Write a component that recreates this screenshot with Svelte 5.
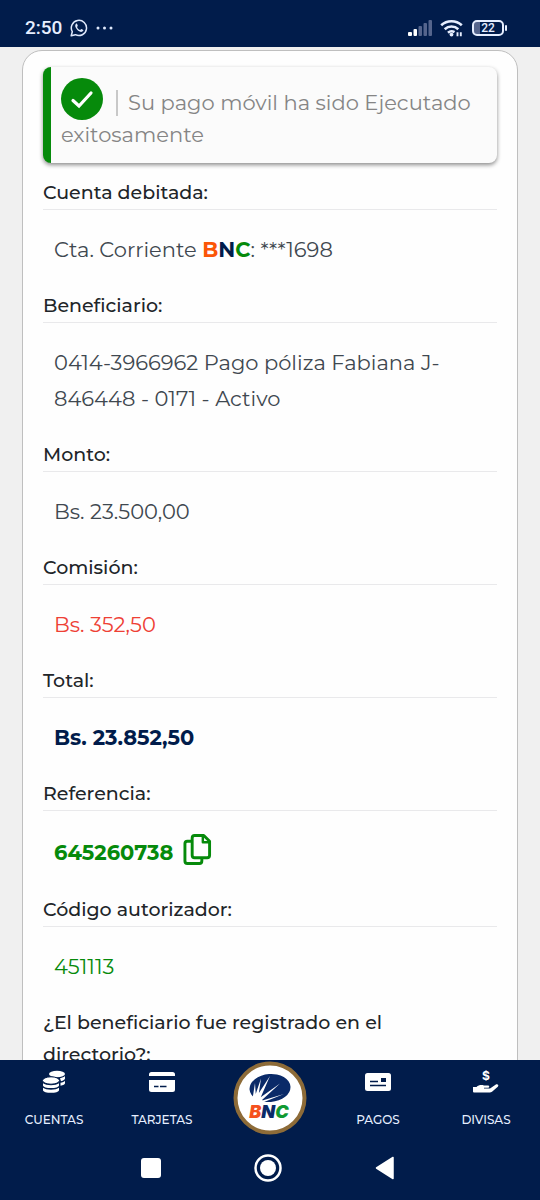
<script lang="ts">
  type Row = { label: string; value: string; tone?: 'fee' | 'total' }

  const account = { kind: 'Cta. Corriente', mask: '***1698' }
  const reference = '645260738'

  const rows: Row[] = [
    { label: 'Beneficiario:', value: '0414-3966962 Pago póliza Fabiana J-846448 - 0171 - Activo' },
    { label: 'Monto:', value: 'Bs. 23.500,00' },
    { label: 'Comisión:', value: 'Bs. 352,50', tone: 'fee' },
    { label: 'Total:', value: 'Bs. 23.852,50', tone: 'total' },
  ]

  function copyReference() {
    navigator.clipboard?.writeText(reference)
  }
</script>

<div class="screen">
  <header class="status">
    <div class="status-side">
      <span class="clock">2:50</span>
      <svg width="18" height="18" viewBox="0 0 18 18" fill="none" stroke="#dfe8fb" aria-label="WhatsApp">
        <path d="M1.2 16.8l1.1-4.1A7.6 7.6 0 1 1 5.4 15.7z" stroke-width="1.5" stroke-linejoin="round" />
        <path d="M6 4.8c-1.6 1.4-.7 3.9 1.2 5.9s4.4 3 5.9 1.4c.4-.7.3-1.1-.2-1.4l-1.5-.8c-.5-.2-.8 1-1.3 1-1 0-3-2-3-3 .2-.5.9-.7.7-1.2L7.1 5c-.3-.5-.7-.5-1.1-.2z" fill="#dfe8fb" stroke="none" />
      </svg>
      <svg width="18" height="4" viewBox="0 0 18 4" fill="#dfe8fb" aria-hidden="true">
        <circle cx="2" cy="2" r="1.5" />
        <circle cx="8.5" cy="2" r="1.5" />
        <circle cx="15" cy="2" r="1.5" />
      </svg>
    </div>
    <div class="status-side">
      <svg width="25" height="16" viewBox="0 0 25 16" fill="#55658d" aria-label="Señal">
        <rect x="1" y="12" width="4" height="4" rx="1" fill="#fff" />
        <rect x="6.5" y="9" width="3.5" height="7" rx="1" fill="#fff" />
        <rect x="11.5" y="6" width="3.5" height="10" rx="1" />
        <rect x="16.5" y="3" width="3.5" height="13" rx="1" />
        <rect x="21.5" y="0" width="3.5" height="16" rx="1" />
      </svg>
      <svg width="24" height="18" viewBox="0 0 24 18" fill="none" stroke="#e6eeff" stroke-width="2.6" aria-label="Wi-Fi">
        <path d="M1.2 6.3a15 15 0 0 1 20.6 0" />
        <path d="M4.7 10.2a10 10 0 0 1 13.6 0" />
        <path d="M8 13.8a5.500 5.500 0 0 1 6.500-.6" />
        <circle cx="11.5" cy="15.6" r="1.9" fill="#e6eeff" stroke="none" />
        <path d="M17.5 13.2v4M20.8 13.2v4" stroke-width="1.9" />
      </svg>
      <div class="battery"><span>22</span></div>
    </div>
  </header>

  <main>
    <section class="receipt">
      <div class="notice" role="status">
        <svg class="check" width="42" height="42" viewBox="0 0 42 42" aria-hidden="true">
          <circle cx="21" cy="21" r="21" fill="#068a0b" />
          <path d="M12 22.5l6 5.5L30 15" fill="none" stroke="#fff" stroke-width="3.2" stroke-linecap="round" />
        </svg>
        <span class="bar"></span>
        Su pago móvil ha sido Ejecutado exitosamente
      </div>

      <dl>
        <dt>Cuenta debitada:</dt>
        <dd>{account.kind} <b><span class="b">B</span><span class="n">N</span><span class="c">C</span></b>: {account.mask}</dd>
        {#each rows as row (row.label)}
          <dt>{row.label}</dt>
          <dd class={row.tone}>{row.value}</dd>
        {/each}
        <dt>Referencia:</dt>
        <dd class="reference">
          {reference}
          <button type="button" onclick={copyReference} aria-label="Copiar referencia">
            <svg width="29" height="33" viewBox="0 0 30 34" fill="none" stroke="#068a0b" stroke-width="3" stroke-linejoin="round">
              <path d="M9 8.500H4.500a2.500 2.500 0 0 0-2.500 2.500v18a2.500 2.500 0 0 0 2.500 2.500H17a2.500 2.500 0 0 0 2.500-2.500v-3" />
              <path d="M12 2.500h9.500l6 6V23a2.500 2.500 0 0 1-2.500 2.500H12A2.500 2.500 0 0 1 9.500 23V5A2.500 2.500 0 0 1 12 2.500z" />
              <path d="M20.500 3v6.500H27" stroke-width="2.5" />
            </svg>
          </button>
        </dd>
        <dt>Código autorizador:</dt>
        <dd class="code">451113</dd>
        <dt>¿El beneficiario fue registrado en el directorio?:</dt>
      </dl>
    </section>
  </main>

  <nav class="tabs">
    <a href="#cuentas">
      <svg width="24" height="24" viewBox="0 0 24 24" fill="#fff" aria-hidden="true">
        <ellipse cx="15" cy="4" rx="8" ry="3.2" />
        <path d="M18 8.200c2.200-.4 4.200-1.200 5-2.200v2.500c0 1.200-1.600 2.200-4 2.700zM18.500 12.800c2-.5 3.700-1.200 4.500-2.100v2.500c0 1.100-1.700 2-4.500 2.500z" />
        <ellipse cx="9" cy="10.5" rx="8.5" ry="3.7" stroke="#011c4b" stroke-width="1" />
        <path d="M1 13.200c3 2.600 13 2.600 16 0v2.300c0 3.400-16 3.400-16 0zM1 17.700c3 2.600 13 2.600 16 0v2.600c0 3.400-16 3.400-16 0z" />
      </svg>
      CUENTAS
    </a>
    <a href="#tarjetas">
      <svg width="26" height="24" viewBox="0 0 26 24" fill="#fff" aria-hidden="true">
        <path d="M2.500 2h21A2.500 2.500 0 0 1 26 4.500V6H0V4.500A2.500 2.500 0 0 1 2.500 2zM0 10h26v9.500a2.500 2.500 0 0 1-2.500 2.500h-21A2.500 2.500 0 0 1 0 19.500z" />
        <path d="M5 16.500h4.500M11 16.500h6.500" stroke="#011c4b" stroke-width="1.5" />
      </svg>
      TARJETAS
    </a>
    <a class="home" href="#inicio" aria-label="Inicio">
      <svg width="74" height="74" viewBox="0 0 74 74" aria-hidden="true">
        <circle cx="37" cy="37" r="34.5" fill="#fff" stroke="#8d6b38" stroke-width="4" />
        <ellipse cx="37" cy="27" rx="20.5" ry="14" fill="#0a2a68" transform="rotate(-4 37 27)" />
        <path d="M14 32l7 7 8 0 3 2.500-8 2-12-6z" fill="#fff" />
        <path d="M19 41L22 22l1 15zM20 41L28 17.500 25 38zM20 41L37 15 27 38zM21 41L47 22.500 29 39zM21 42L51 33 31 41z" fill="#fff" />
        <text x="36" y="57" text-anchor="middle" class="brand"><tspan fill="#f5511e">B</tspan><tspan fill="#0a2a68">N</tspan><tspan fill="#109a32">C</tspan></text>
      </svg>
    </a>
    <a href="#pagos">
      <svg width="26" height="24" viewBox="0 0 26 24" fill="#fff" aria-hidden="true">
        <rect x="0" y="3" width="26" height="18" rx="2.5" />
        <path d="M5 11.500h8M5 15.500h16" stroke="#011c4b" stroke-width="1.4" />
        <rect x="16" y="8" width="5" height="4" fill="#011c4b" />
      </svg>
      PAGOS
    </a>
    <a href="#divisas">
      <svg class="divisas" width="26" height="24" viewBox="0 0 26 24" fill="#fff" aria-hidden="true">
        <path d="M0 17h3.500c2-2 5-2.500 7.500-1.500h4c1.700 0 1.700 2.300 0 2.300h-4v.7h6l5.500-3.800c2-1.300 3.800.6 2.300 2l-5.800 5c-.7.5-1.300.8-2.200.8H1a1 1 0 0 1-1-1z" />
        <text x="13" y="10" text-anchor="middle" class="dollar">$</text>
      </svg>
      DIVISAS
    </a>
  </nav>

  <footer class="system">
    <button type="button" aria-label="Recientes">
      <svg width="20" height="20" viewBox="0 0 20 20"><rect width="20" height="20" rx="3" fill="#fff" /></svg>
    </button>
    <button type="button" aria-label="Inicio del sistema">
      <svg width="28" height="28" viewBox="0 0 28 28"><circle cx="14" cy="14" r="12.5" fill="none" stroke="#fff" stroke-width="2.5" /><circle cx="14" cy="14" r="8" fill="#fff" /></svg>
    </button>
    <button type="button" aria-label="Atrás">
      <svg width="20" height="24" viewBox="0 0 20 24"><path d="M1.500 12L18 1.500v21z" fill="#fff" stroke="#fff" stroke-width="1.5" stroke-linejoin="round" /></svg>
    </button>
  </footer>
</div>

<style>
  :global(body) {
    margin: 0;
    background: #f0f0f0;
  }

  .screen {
    --navy: #011c4b;
    --green: #068a0b;
    display: flex;
    flex-direction: column;
    height: 100vh;
    font-family: Montserrat, Inter, sans-serif;
    color: #212529;
  }

  svg {
    display: block;
    flex-shrink: 0;
  }

  button {
    padding: 0;
    border: none;
    background: transparent;
    cursor: pointer;
  }

  .status {
    display: flex;
    justify-content: space-between;
    align-items: center;
    height: 47px;
    padding: 8px 36px 0 25px;
    box-sizing: border-box;
    flex-shrink: 0;
    background: var(--navy);
    color: #e6eeff;
    font-family: Roboto, sans-serif;
  }

  .status-side {
    display: flex;
    align-items: center;
    gap: 8px;
  }

  .clock {
    font-size: 19px;
    font-weight: 500;
  }

  .battery {
    position: relative;
    width: 32px;
    height: 16px;
    box-sizing: border-box;
    border: 2px solid #e6eeff;
    border-radius: 5px;
    background: linear-gradient(to right, #55658d 6px, transparent 6px);
    font-size: 12px;
    font-weight: 500;
    line-height: 12px;
    text-align: center;
  }

  .battery::after {
    content: '';
    position: absolute;
    right: -5px;
    top: 3px;
    width: 2px;
    height: 6px;
    border-radius: 1px;
    background: #e6eeff;
  }

  main {
    flex: 1;
    min-height: 0;
    padding: 3px 22px 0;
    overflow-y: auto;
    scrollbar-width: none;
  }

  .receipt {
    padding: 16px 20px 40px;
    border: 1px solid #bfbfbf;
    border-radius: 20px;
    background: #fefefe;
  }

  .notice {
    padding: 11px 20px 13px 10px;
    border-left: 8px solid var(--green);
    border-radius: 8px;
    background: #fbfbfb;
    box-shadow: 0 2px 4px rgb(0 0 0 / 45%);
    color: #858585;
    font-size: 21px;
    line-height: 30px;
  }

  .check {
    display: inline-block;
    vertical-align: -10px;
  }

  .bar {
    display: inline-block;
    height: 26px;
    margin: 0 5px 0 7px;
    border-left: 2px solid #c8c8c8;
    vertical-align: -6px;
  }

  dl {
    margin: 14px 0 0;
  }

  dt {
    padding-right: 12px;
    border-bottom: 1px solid #e9e9eb;
    font-size: 19px;
    font-weight: 500;
    line-height: 32px;
  }

  dd {
    margin: 0;
    padding: 22px 11px;
    color: #3f4850;
    font-size: 21px;
    line-height: 36px;
  }

  b {
    font-weight: 700;
  }

  .b {
    color: #fb5607;
  }

  .n {
    color: var(--navy);
  }

  .c {
    color: var(--green);
  }

  .fee {
    color: #ee4035;
  }

  .total {
    color: var(--navy);
    font-weight: 700;
  }

  .reference {
    display: flex;
    align-items: center;
    gap: 10px;
    color: var(--green);
    font-weight: 700;
    line-height: 39px;
  }

  .reference button {
    padding-bottom: 6px;
  }

  .code {
    color: var(--green);
  }

  .tabs {
    display: grid;
    grid-template-columns: repeat(5, 1fr);
    height: 76px;
    flex-shrink: 0;
    background: var(--navy);
  }

  .tabs a {
    display: flex;
    flex-direction: column;
    align-items: center;
    gap: 16px;
    padding-top: 10px;
    color: #e6eeff;
    font-size: 12px;
    font-weight: 500;
    line-height: 20px;
    text-decoration: none;
  }

  .tabs .home {
    padding-top: 1px;
  }

  .brand {
    font: italic 900 18px Inter, sans-serif;
  }

  .divisas {
    overflow: visible;
  }

  .dollar {
    font: 700 12px Inter, sans-serif;
  }

  .system {
    display: grid;
    grid-template-columns: repeat(3, 117px);
    justify-content: center;
    height: 64px;
    padding-right: 4px;
    flex-shrink: 0;
    background: var(--navy);
  }

  .system button {
    display: grid;
    place-items: center;
  }
</style>
